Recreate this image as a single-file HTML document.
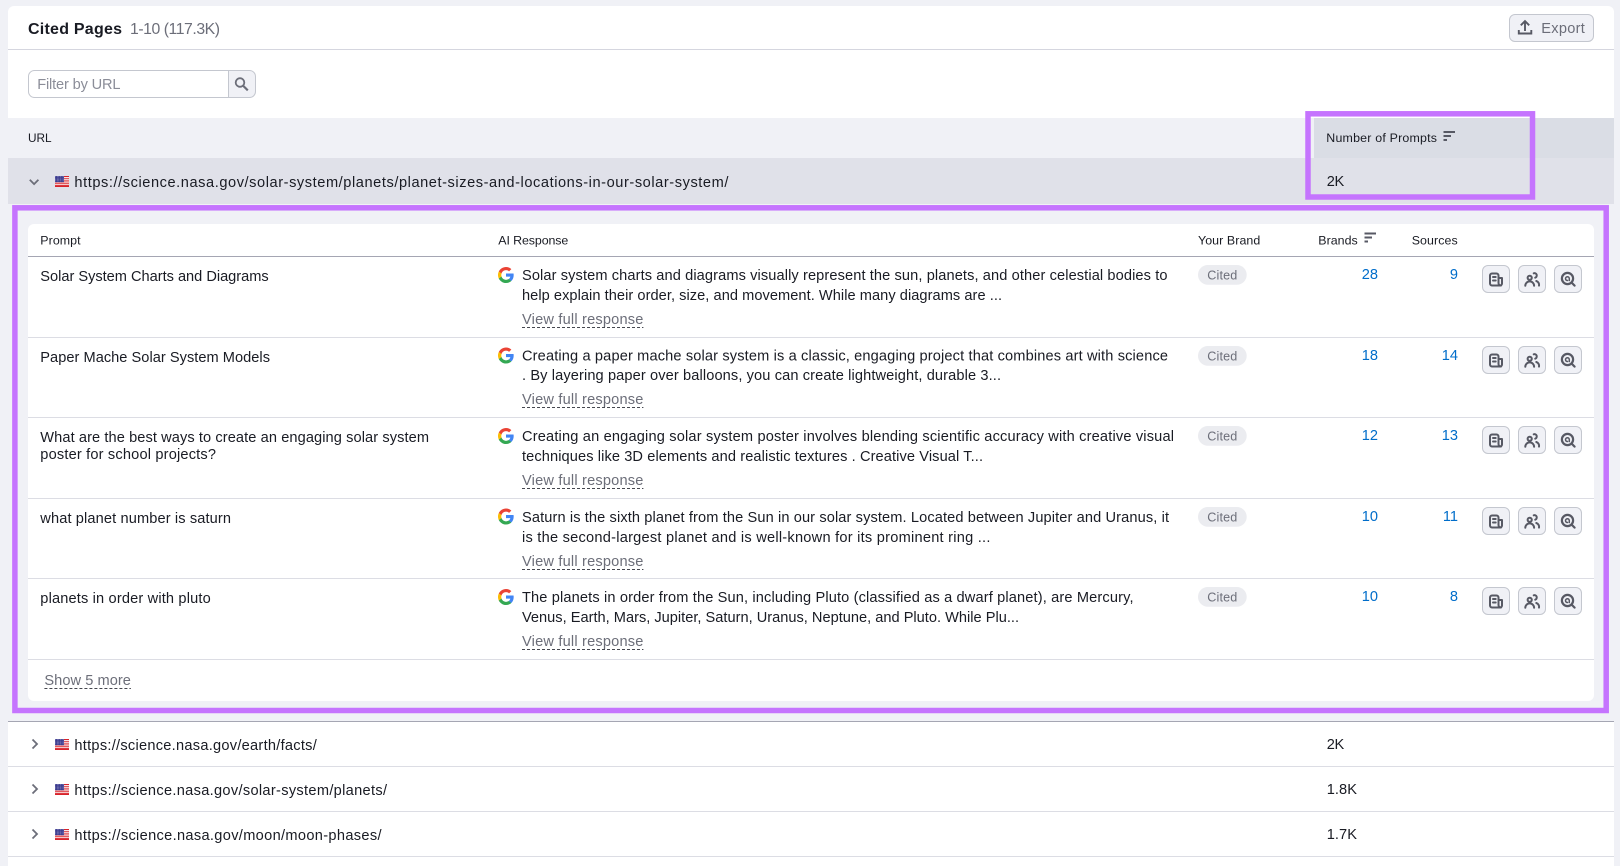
<!DOCTYPE html>
<html lang="en"><head><meta charset="utf-8"><title>Cited Pages</title>
<style>
html,body{margin:0;padding:0;background:#f0f1f6;width:1620px;height:866px;overflow:hidden}
svg{display:block}
text{font-family:"Liberation Sans",sans-serif;white-space:pre}
.t{font-size:14.6px;fill:#191b23}
.h{font-size:12.4px;fill:#191b23}
.v{font-size:14.6px;fill:#6c6e79}
.n{font-size:14.6px;fill:#006dca}
.c{font-size:12.6px;fill:#6c6e79}
.d{stroke:#45474f;stroke-width:1;stroke-dasharray:3 2}
.i{fill:none;stroke:#575964;stroke-width:2;stroke-linecap:round;stroke-linejoin:round}
.ch{fill:none;stroke:#6c6e79;stroke-width:1.8}
</style></head><body>
<svg width="1620" height="866" viewBox="0 0 1620 866" xmlns="http://www.w3.org/2000/svg">
<defs>
<pattern id="st" width="1.6" height="1.4" patternUnits="userSpaceOnUse"><rect width="1.6" height="1.4" fill="#34348a"/><rect x=".3" y=".3" width=".7" height=".6" fill="#c8c8e6"/></pattern>
<g id="g"><g transform="scale(.3636) translate(-2 -2)">
<path fill="#4285F4" d="M45.12 24.5c0-1.56-.14-3.06-.4-4.5H24v8.51h11.84c-.51 2.75-2.06 5.08-4.39 6.64v5.52h7.11c4.16-3.83 6.56-9.47 6.56-16.17z"/>
<path fill="#34A853" d="M24 46c5.94 0 10.92-1.97 14.56-5.33l-7.11-5.52c-1.97 1.32-4.49 2.1-7.45 2.1-5.73 0-10.58-3.87-12.31-9.07H4.34v5.7C7.96 41.07 15.4 46 24 46z"/>
<path fill="#FBBC05" d="M11.69 28.18C11.25 26.86 11 25.45 11 24s.25-2.86.69-4.18v-5.7H4.34C2.85 17.09 2 20.45 2 24c0 3.55.85 6.91 2.34 9.88l7.35-5.7z"/>
<path fill="#EA4335" d="M24 10.75c3.23 0 6.13 1.11 8.41 3.29l6.31-6.31C34.91 4.18 29.93 2 24 2 15.4 2 7.96 6.93 4.34 14.12l7.35 5.7c1.73-5.2 6.58-9.07 12.31-9.07z"/>
</g></g>
<g id="f">
<rect width="14" height="11" fill="#fff"/>
<path fill="#d8232a" d="M0 0h14v1.1H0zM0 2.2h14v1.100H0zM0 4.400h14v1.100H0zM0 6.600h14v1.100H0zM0 8.800h14v1.100H0z"/>
<path fill="#d8232a" d="M0 9.900h14V11H0z"/>
<rect width="9" height="6.200" fill="url(#st)"/>
</g>
<g id="b">
<rect x=".5" y=".5" width="27" height="27" rx="5.5" fill="#f0f1f6" stroke="#c4c7cf"/>
<g class="i">
<path d="M8 10.500a2 2 0 0 1 2-2h4.500a2 2 0 0 1 2 2v7.500a2.500 2.500 0 0 0 2.500 2.500H10a2 2 0 0 1-2-2z"/>
<path d="M17 13h3v5.500a2 2 0 0 1-2 2M11 12h2.700M11 15.500h2.700"/>
</g>
</g>
<g id="u">
<rect x=".5" y=".5" width="27" height="27" rx="5.5" fill="#f0f1f6" stroke="#c4c7cf"/>
<g class="i">
<circle cx="11.700" cy="12.800" r="2.100"/>
<path d="M7.300 20.800a4.400 4.400 0 0 1 8.800 0M15.700 8.300a2.300 2.300 0 1 1 1.500 4.400M18.300 16a4 4 0 0 1 2.700 4.600"/>
</g>
</g>
<g id="s">
<rect x=".5" y=".5" width="27" height="27" rx="5.5" fill="#f0f1f6" stroke="#c4c7cf"/>
<g class="i">
<circle cx="13.500" cy="13.500" r="5.600" stroke-width="2.200"/>
<path d="M18 18l2.600 2.600" stroke-width="2.200"/>
<path d="M13.500 15.500a1.900 1.900 0 1 1 1.800-2v2" stroke-width="1.500"/>
</g>
</g>
<g id="o"><path d="M0 1h11.500M0 5h7.500M0 9h3.500" stroke="#575964" stroke-width="1.900" fill="none"/></g>
</defs>

<rect width="1620" height="866" fill="#f0f1f6"/>
<path d="M8 866V12a6 6 0 0 1 6-6h1594a6 6 0 0 1 6 6v854z" fill="#fff"/>
<rect x="8" y="49" width="1606" height="1" fill="#d5d6df"/>

<text x="28" y="34" font-size="16" font-weight="700" fill="#191b23" textLength="94">Cited Pages</text>
<text x="130" y="34" font-size="15.800" fill="#6c6e79" textLength="90">1-10 (117.3K)</text>

<rect x="1509.500" y="14.500" width="84" height="27" rx="5.500" fill="#f0f1f6" stroke="#c4c7cf"/>
<path d="M1525 31v-9.500M1520.800 25.300l4.200-4.200 4.200 4.200M1518.800 30v3.500h12.500V30" fill="none" stroke="#575964" stroke-width="1.900"/>
<text x="1541.300" y="33" font-size="14.600" fill="#6c6e79" textLength="43.500">Export</text>

<path d="M228.500 70.500H34.500a6 6 0 0 0-6 6v15a6 6 0 0 0 6 6h194z" fill="#fff" stroke="#c4c7cf"/>
<path d="M228.500 70.500H249.500a6 6 0 0 1 6 6v15a6 6 0 0 1-6 6H228.500z" fill="#f0f1f6" stroke="#c4c7cf"/>
<circle cx="240" cy="82.500" r="4.300" fill="none" stroke="#6c6e79" stroke-width="1.800"/>
<path d="M243 85.600l4.800 4.800" stroke="#6c6e79" stroke-width="2.200"/>
<text x="37.200" y="89" class="v" style="fill:#8b8d98" textLength="83.300">Filter by URL</text>

<rect x="8" y="118" width="1306" height="40" fill="#f0f1f6"/>
<rect x="1314" y="118" width="300" height="40" fill="#dadde5"/>
<text x="28" y="142" font-size="11.800" fill="#191b23" textLength="23.500">URL</text>
<text x="1326.300" y="142" class="h" textLength="110.700">Number of Prompts</text>
<use href="#o" x="1443.500" y="131"/>

<rect x="8" y="158" width="1606" height="46" fill="#e0e1e9"/>
<path class="ch" d="M29.800 179.800l4.300 4.300 4.300-4.300"/>
<use href="#f" x="55" y="176"/>
<text x="74.400" y="187" class="t" textLength="654">https://science.nasa.gov/solar-system/planets/planet-sizes-and-locations-in-our-solar-system/</text>
<text x="1326.700" y="186" class="t" textLength="17.500">2K</text>

<rect x="8" y="204" width="1606" height="517" fill="#f0f1f6"/>
<path d="M28 695V230a6 6 0 0 1 6-6h1554a6 6 0 0 1 6 6v465a6 6 0 0 1-6 6H34a6 6 0 0 1-6-6z" fill="#fff"/>

<text x="40.300" y="244.300" class="h" textLength="40.300">Prompt</text>
<text x="498.300" y="244.300" class="h" textLength="70">AI Response</text>
<text x="1198" y="244.300" class="h" textLength="62.300">Your Brand</text>
<text x="1318.300" y="244.300" class="h" textLength="39.400">Brands</text>
<use href="#o" x="1364.500" y="232.500"/>
<text x="1411.700" y="244.300" class="h" textLength="46">Sources</text>
<rect x="28" y="256" width="1566" height="1" fill="#a5a6b3"/>
<rect x="28" y="337" width="1566" height="1" fill="#dcdde4"/>
<rect x="28" y="417" width="1566" height="1" fill="#dcdde4"/>
<rect x="28" y="498" width="1566" height="1" fill="#dcdde4"/>
<rect x="28" y="578" width="1566" height="1" fill="#dcdde4"/>
<rect x="28" y="659" width="1566" height="1" fill="#dcdde4"/>

<!-- Row 1 -->
<text x="40.300" y="281" class="t" textLength="228.400">Solar System Charts and Diagrams</text>
<use href="#g" x="498" y="267"/>
<text x="522" y="280" class="t" textLength="645.500">Solar system charts and diagrams visually represent the sun, planets, and other celestial bodies to</text>
<text x="522" y="300" class="t" textLength="480">help explain their order, size, and movement. While many diagrams are ...</text>
<text x="522" y="324" class="v" textLength="121.400">View full response</text>
<path class="d" d="M522 327.500h121.400"/>
<rect x="1198" y="265" width="48.700" height="19.700" rx="9.850" fill="#ebecf0"/>
<text x="1207.300" y="279.300" class="c" textLength="30">Cited</text>
<text x="1378" y="279" class="n" text-anchor="end">28</text>
<text x="1458" y="279" class="n" text-anchor="end">9</text>
<use href="#b" x="1482" y="265"/><use href="#u" x="1518" y="265"/><use href="#s" x="1554" y="265"/>

<!-- Row 2 -->
<text x="40.300" y="362" class="t" textLength="229.700">Paper Mache Solar System Models</text>
<use href="#g" x="498" y="347.500"/>
<text x="522" y="360.300" class="t" textLength="646">Creating a paper mache solar system is a classic, engaging project that combines art with science</text>
<text x="522" y="380" class="t" textLength="479">. By layering paper over balloons, you can create lightweight, durable 3...</text>
<text x="522" y="404" class="v" textLength="121.400">View full response</text>
<path class="d" d="M522 407.500h121.400"/>
<rect x="1198" y="346" width="48.700" height="19.700" rx="9.850" fill="#ebecf0"/>
<text x="1207.300" y="360.300" class="c" textLength="30">Cited</text>
<text x="1378" y="360" class="n" text-anchor="end">18</text>
<text x="1458" y="360" class="n" text-anchor="end">14</text>
<use href="#b" x="1482" y="346"/><use href="#u" x="1518" y="346"/><use href="#s" x="1554" y="346"/>

<!-- Row 3 -->
<text x="40.300" y="442" class="t" textLength="388.700">What are the best ways to create an engaging solar system</text>
<text x="40.300" y="459" class="t" textLength="175.700">poster for school projects?</text>
<use href="#g" x="498" y="428"/>
<text x="522" y="441" class="t" textLength="652">Creating an engaging solar system poster involves blending scientific accuracy with creative visual</text>
<text x="522" y="461" class="t" textLength="461">techniques like 3D elements and realistic textures . Creative Visual T...</text>
<text x="522" y="485" class="v" textLength="121.400">View full response</text>
<path class="d" d="M522 488.500h121.400"/>
<rect x="1198" y="426" width="48.700" height="19.700" rx="9.850" fill="#ebecf0"/>
<text x="1207.300" y="440.300" class="c" textLength="30">Cited</text>
<text x="1378" y="440" class="n" text-anchor="end">12</text>
<text x="1458" y="440" class="n" text-anchor="end">13</text>
<use href="#b" x="1482" y="426"/><use href="#u" x="1518" y="426"/><use href="#s" x="1554" y="426"/>

<!-- Row 4 -->
<text x="40.300" y="523" class="t" textLength="190.700">what planet number is saturn</text>
<use href="#g" x="498" y="508.500"/>
<text x="522" y="522" class="t" textLength="647">Saturn is the sixth planet from the Sun in our solar system. Located between Jupiter and Uranus, it</text>
<text x="522" y="542" class="t" textLength="468.400">is the second-largest planet and is well-known for its prominent ring ...</text>
<text x="522" y="566" class="v" textLength="121.400">View full response</text>
<path class="d" d="M522 569.500h121.400"/>
<rect x="1198" y="507" width="48.700" height="19.700" rx="9.850" fill="#ebecf0"/>
<text x="1207.300" y="521.300" class="c" textLength="30">Cited</text>
<text x="1378" y="521" class="n" text-anchor="end">10</text>
<text x="1458" y="521" class="n" text-anchor="end">11</text>
<use href="#b" x="1482" y="507"/><use href="#u" x="1518" y="507"/><use href="#s" x="1554" y="507"/>

<!-- Row 5 -->
<text x="40.300" y="603" class="t" textLength="170.400">planets in order with pluto</text>
<use href="#g" x="498" y="589"/>
<text x="522" y="602" class="t" textLength="611.500">The planets in order from the Sun, including Pluto (classified as a dwarf planet), are Mercury,</text>
<text x="522" y="622" class="t" textLength="497">Venus, Earth, Mars, Jupiter, Saturn, Uranus, Neptune, and Pluto. While Plu...</text>
<text x="522" y="646" class="v" textLength="121.400">View full response</text>
<path class="d" d="M522 649.500h121.400"/>
<rect x="1198" y="587" width="48.700" height="19.700" rx="9.850" fill="#ebecf0"/>
<text x="1207.300" y="601.300" class="c" textLength="30">Cited</text>
<text x="1378" y="601" class="n" text-anchor="end">10</text>
<text x="1458" y="601" class="n" text-anchor="end">8</text>
<use href="#b" x="1482" y="587"/><use href="#u" x="1518" y="587"/><use href="#s" x="1554" y="587"/>

<text x="44.400" y="685" class="v" textLength="86.500">Show 5 more</text>
<path class="d" d="M44.400 688.500h86.500"/>

<!-- Highlight boxes -->
<rect x="14.900" y="207.800" width="1591.300" height="502.700" fill="none" stroke="#c574fe" stroke-width="5.500"/>
<rect x="1308" y="113.800" width="224.500" height="83.200" fill="none" stroke="#c574fe" stroke-width="5.500"/>

<!-- Lower rows -->
<rect x="8" y="721" width="1606" height="1" fill="#a5a6b3"/>
<rect x="8" y="766" width="1606" height="1" fill="#dcdde4"/>
<rect x="8" y="811" width="1606" height="1" fill="#dcdde4"/>
<rect x="8" y="856" width="1606" height="1" fill="#dcdde4"/>

<path class="ch" d="M32.500 739.500l4.500 4.500-4.500 4.500"/>
<use href="#f" x="55" y="739"/>
<text x="74.400" y="750" class="t" textLength="242.400">https://science.nasa.gov/earth/facts/</text>
<text x="1326.700" y="749" class="t" textLength="17.500">2K</text>

<path class="ch" d="M32.500 784.500l4.500 4.500-4.500 4.500"/>
<use href="#f" x="55" y="784"/>
<text x="74.400" y="795" class="t" textLength="312.600">https://science.nasa.gov/solar-system/planets/</text>
<text x="1326.700" y="794" class="t" textLength="30.300">1.8K</text>

<path class="ch" d="M32.500 829.500l4.500 4.500-4.500 4.500"/>
<use href="#f" x="55" y="829"/>
<text x="74.400" y="840" class="t" textLength="307.100">https://science.nasa.gov/moon/moon-phases/</text>
<text x="1326.700" y="839" class="t" textLength="30.300">1.7K</text>
</svg>
</body></html>
